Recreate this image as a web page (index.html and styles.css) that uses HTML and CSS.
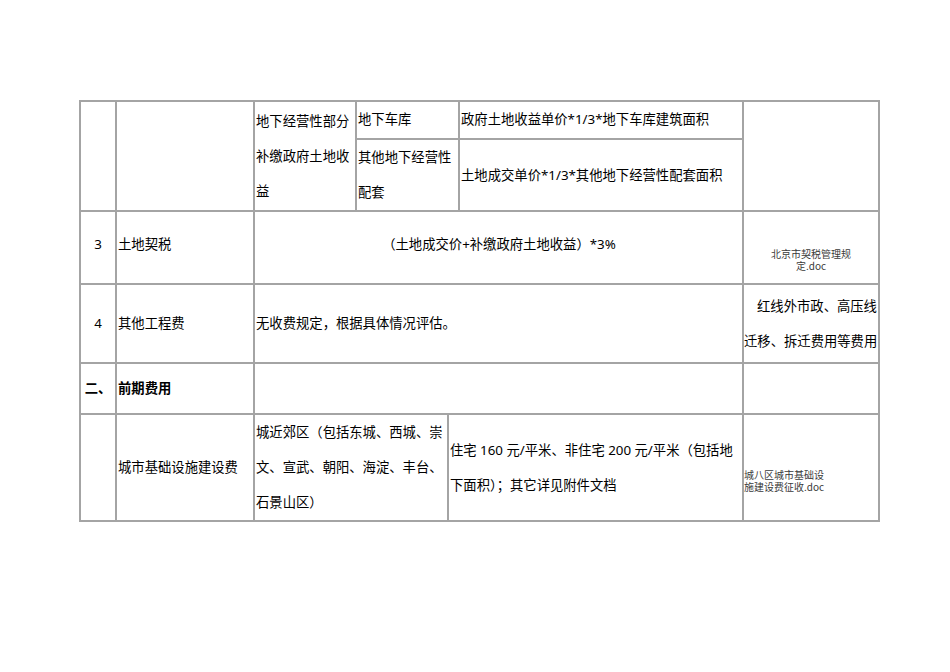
FILE: index.html
```html
<!DOCTYPE html>
<html lang="zh-CN">
<head>
<meta charset="utf-8">
<title>费用表</title>
<link rel="stylesheet" href="styles.css">
</head>
<body>
<div class="page">
  <table class="sheet">
    <colgroup>
      <col class="c1"><col class="c2"><col class="c3"><col class="c4"><col class="c5"><col class="c6"><col class="c7">
    </colgroup>
    <tr class="r1a">
      <td rowspan="2" class="num"></td>
      <td rowspan="2"></td>
      <td rowspan="2">地下经营性部分补缴政府土地收益</td>
      <td colspan="2" class="top">地下车库</td>
      <td class="top">政府土地收益单价*1/3*地下车库建筑面积</td>
      <td rowspan="2" class="note"></td>
    </tr>
    <tr class="r1b">
      <td colspan="2">其他地下经营性配套</td>
      <td>土地成交单价*1/3*其他地下经营性配套面积</td>
    </tr>
    <tr class="r2">
      <td class="num lift">3</td>
      <td class="lift">土地契税</td>
      <td colspan="4" class="center lift">（土地成交价+补缴政府土地收益）*3%</td>
      <td class="note center"><span class="attach">北京市契税管理规<br>定.doc</span></td>
    </tr>
    <tr class="r3">
      <td class="num">4</td>
      <td>其他工程费</td>
      <td colspan="4">无收费规定，根据具体情况评估。</td>
      <td class="note"><span class="indent">红线外市政、高压线</span><br>迁移、拆迁费用等费用</td>
    </tr>
    <tr class="r4">
      <td class="num bold">二、</td>
      <td class="bold">前期费用</td>
      <td colspan="4"></td>
      <td class="note"></td>
    </tr>
    <tr class="r5">
      <td class="num"></td>
      <td>城市基础设施建设费</td>
      <td colspan="2">城近郊区（包括东城、西城、崇文、宣武、朝阳、海淀、丰台、石景山区）</td>
      <td colspan="2" class="nowrap">住宅 160 元/平米、非住宅 200 元/平米（包括地<br>下面积）；其它详见附件文档</td>
      <td class="note"><span class="attach attach-low">城八区城市基础设<br>施建设费征收.doc</span></td>
    </tr>
  </table>
</div>
</body>
</html>
```
FILE: styles.css
```css
html, body {
  margin: 0;
  padding: 0;
  background: #ffffff;
}

.page {
  padding: 100px 0 0 79px;
}

.sheet {
  border-collapse: separate;
  border-spacing: 0;
  table-layout: fixed;
  width: 801px;
  border-top: 2px solid #a4a4a4;
  border-left: 2px solid #a4a4a4;
  font-family: "Noto Sans", "Noto Sans CJK SC", sans-serif;
  font-size: 13.33px;
  line-height: 35px;
  color: #000000;
}

.c1 { width: 36px; }
.c2 { width: 138px; }
.c3 { width: 102px; }
.c4 { width: 92px; }
.c5 { width: 11px; }
.c6 { width: 284px; }
.c7 { width: 136px; }

.sheet td {
  border-right: 2px solid #a4a4a4;
  border-bottom: 2px solid #a4a4a4;
  padding: 0 0 0 1px;
  vertical-align: middle;
  text-align: left;
  overflow: hidden;
}

.r1a { height: 38px; }
.r1b { height: 72px; }
.r2 { height: 73px; }
.r3 { height: 79px; }
.r4 { height: 51px; }
.r5 { height: 107px; }

.sheet td.num {
  text-align: center;
  padding: 0;
}

.sheet td.center {
  text-align: center;
}

.sheet td.lift {
  padding-bottom: 6px;
}

.sheet td.top {
  vertical-align: top;
}

.sheet td.note {
  padding: 0;
  white-space: nowrap;
}

.bold {
  font-weight: bold;
}

.nowrap {
  white-space: nowrap;
}

.indent {
  padding-left: 13px;
}

.attach {
  display: inline-block;
  padding-top: 36px;
  font-size: 10px;
  line-height: 12px;
  color: #3a3a3a;
  font-family: "Noto Sans CJK SC", sans-serif;
  font-weight: 400;
}

.attach-low {
  padding-top: 37px;
}
```
